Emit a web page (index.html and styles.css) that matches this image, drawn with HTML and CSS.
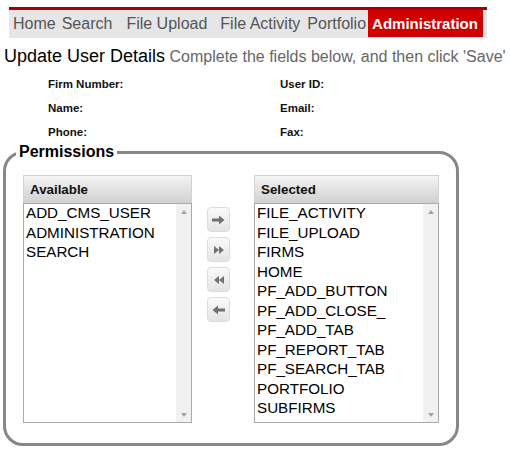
FILE: index.html
```html
<!DOCTYPE html>
<html>
<head>
<meta charset="utf-8">
<link rel="stylesheet" href="styles.css">
</head>
<body>
<nav class="nav">
  <span class="nav-item home">Home</span>
  <span class="nav-item search">Search</span>
  <span class="nav-item upload">File Upload</span>
  <span class="nav-item activity">File Activity</span>
  <span class="nav-item portfolio">Portfolio</span>
  <span class="nav-item admin">Administration</span>
</nav>
<div class="heading"><span class="title">Update User Details</span> <span class="subtitle">Complete the fields below, and then click 'Save'</span></div>
<div class="fields">
  <div class="label">Firm Number:</div><div class="label">User ID:</div>
  <div class="label">Name:</div><div class="label">Email:</div>
  <div class="label">Phone:</div><div class="label">Fax:</div>
</div>
<fieldset class="perms">
  <legend class="perms-legend">Permissions</legend>
  <div class="perms-row">
    <div class="listcol avail">
      <div class="list-head">Available</div>
      <div class="list">
        <div class="options">
          <div class="opt">ADD_CMS_USER</div>
          <div class="opt">ADMINISTRATION</div>
          <div class="opt">SEARCH</div>
        </div>
        <div class="sbar"><div class="sbtn"><span class="tri-up"></span></div><div class="sbtn"><span class="tri-down"></span></div></div>
      </div>
    </div>
    <div class="btncol">
      <div class="mbtn"><svg width="13" height="10" viewBox="0 0 13 10"><path d="M0 3.6h7V0.5L12.5 5 7 9.5V6.4H0z" fill="#707070"/></svg></div>
      <div class="mbtn"><svg width="10" height="8" viewBox="0 0 10 8"><path d="M0 0l5 4-5 4zM5 0l5 4-5 4z" fill="#707070"/></svg></div>
      <div class="mbtn"><svg width="10" height="8" viewBox="0 0 10 8"><path d="M10 0L5 4l5 4zM5 0L0 4l5 4z" fill="#707070"/></svg></div>
      <div class="mbtn"><svg width="13" height="10" viewBox="0 0 13 10"><path d="M13 3.6H6V0.5L0.5 5 6 9.5V6.4H13z" fill="#707070"/></svg></div>
    </div>
    <div class="listcol sel">
      <div class="list-head">Selected</div>
      <div class="list">
        <div class="options">
          <div class="opt">FILE_ACTIVITY</div>
          <div class="opt">FILE_UPLOAD</div>
          <div class="opt">FIRMS</div>
          <div class="opt">HOME</div>
          <div class="opt">PF_ADD_BUTTON</div>
          <div class="opt">PF_ADD_CLOSE_</div>
          <div class="opt">PF_ADD_TAB</div>
          <div class="opt">PF_REPORT_TAB</div>
          <div class="opt">PF_SEARCH_TAB</div>
          <div class="opt">PORTFOLIO</div>
          <div class="opt">SUBFIRMS</div>
        </div>
        <div class="sbar"><div class="sbtn"><span class="tri-up"></span></div><div class="sbtn"><span class="tri-down"></span></div></div>
      </div>
    </div>
  </div>
</fieldset>
</body>
</html>
```
FILE: styles.css
```css
html, body {
  margin: 0;
  padding: 0;
  background: #fff;
  font-family: "Liberation Sans", Arial, sans-serif;
  color: #000;
}
.nav {
  display: flex;
  align-items: flex-start;
  margin: 7px 0 0 9px;
  width: 478px;
  height: 28px;
  border-top: 3px solid #a80000;
  background: #e6e6e6;
}
.nav-item {
  font-size: 16px;
  line-height: 28px;
  color: #555;
  white-space: nowrap;
}
.home { margin-left: 4px; }
.search { margin-left: 6px; }
.upload { margin-left: 14px; }
.activity { margin-left: 13px; }
.portfolio { margin-left: 7px; }
.admin {
  margin-left: 2px;
  padding: 0 5px 0 4px;
  height: 27px;
  line-height: 27px;
  font-size: 15px;
  font-weight: bold;
  color: #fff;
  background: #d10000;
}
.heading {
  margin: 6px 0 0 4px;
  height: 24px;
  line-height: 24px;
  white-space: nowrap;
}
.title { font-size: 18px; color: #000; }
.subtitle { font-size: 16px; color: #666; }
.fields {
  display: grid;
  grid-template-columns: 232px auto;
  padding-left: 48px;
  margin-top: 4px;
}
.label {
  font-size: 11.5px;
  font-weight: bold;
  line-height: 24px;
  color: #111;
}
.perms {
  margin: 0 51px 0 3px;
  padding: 15px 16px 20px 10px;
  border: 3px solid #878787;
  border-radius: 20px;
  min-width: 0;
}
.perms-legend {
  padding: 0 3px;
  font-size: 16px;
  line-height: 16px;
  font-weight: bold;
  color: #000;
}
.perms-row {
  display: flex;
  align-items: flex-start;
  padding-left: 7px;
}
.avail { width: 169px; }
.sel { width: 185px; }
.list-head {
  box-sizing: border-box;
  height: 28px;
  padding-left: 6px;
  border: 1px solid #d2d2d2;
  border-bottom: none;
  background: linear-gradient(#f4f4f4, #d0d0d0);
  font-size: 13.33px;
  font-weight: bold;
  line-height: 27px;
  color: #111;
}
.list {
  box-sizing: border-box;
  height: 220px;
  border: 1px solid #a9a9a9;
  display: flex;
  background: #fff;
}
.options {
  flex: 1;
  padding-left: 2px;
}
.opt {
  font-size: 15.2px;
  line-height: 18.5px;
  padding-bottom: 1px;
  white-space: nowrap;
  overflow: hidden;
}
.sbar {
  width: 15px;
  background: #f1f1f1;
  display: flex;
  flex-direction: column;
  justify-content: space-between;
}
.sbtn {
  height: 15px;
  display: flex;
  align-items: center;
  justify-content: center;
}
.tri-up {
  width: 0; height: 0;
  border-left: 3.5px solid transparent;
  border-right: 3.5px solid transparent;
  border-bottom: 4px solid #a3a3a3;
}
.tri-down {
  width: 0; height: 0;
  border-left: 3.5px solid transparent;
  border-right: 3.5px solid transparent;
  border-top: 4px solid #a3a3a3;
}
.btncol {
  display: flex;
  flex-direction: column;
  gap: 5px;
  margin: 32px 24px 0 15px;
}
.mbtn {
  box-sizing: border-box;
  width: 23px;
  height: 25px;
  border: 1px solid #dcdcdc;
  border-radius: 4px;
  background: linear-gradient(#fafafa, #e4e4e4);
  display: flex;
  align-items: center;
  justify-content: center;
}
```
